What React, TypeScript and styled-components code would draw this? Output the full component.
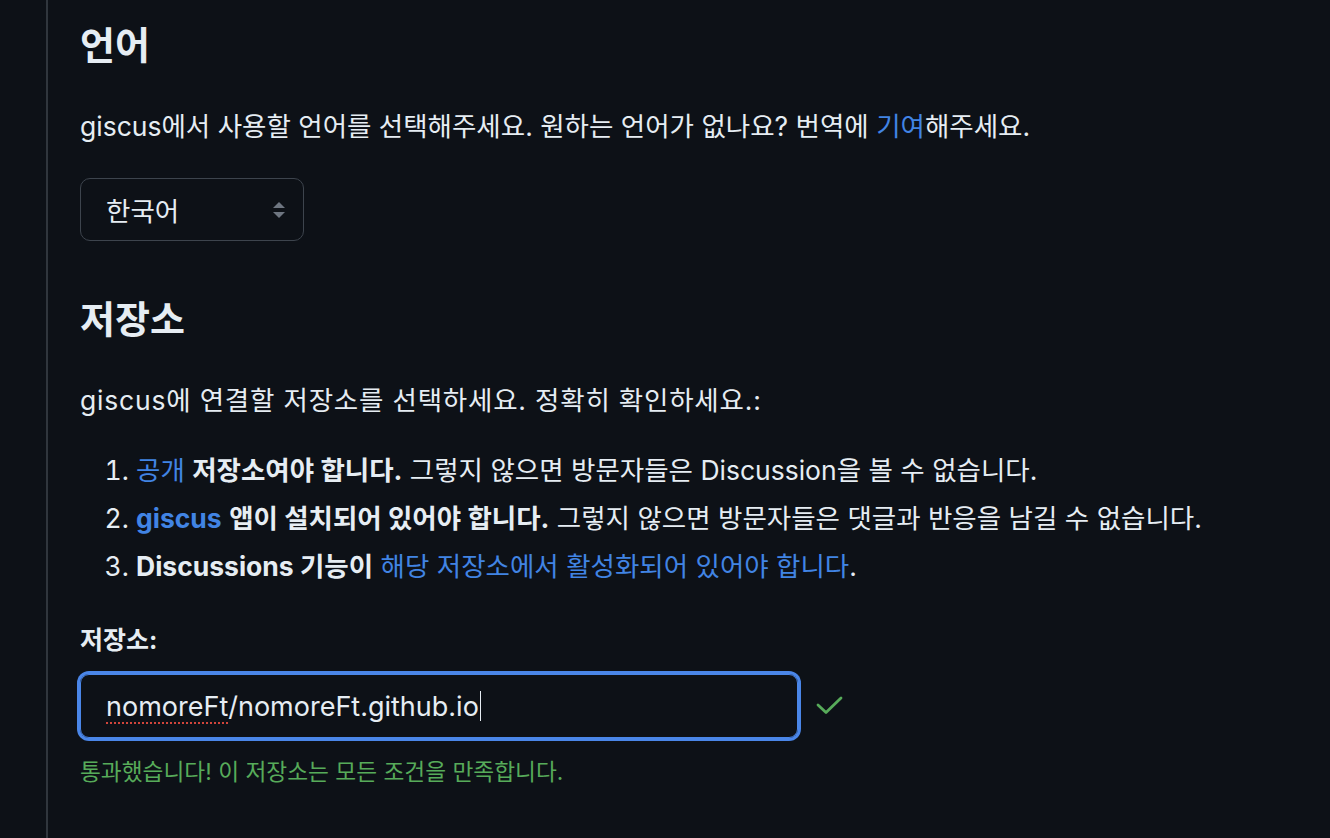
import React from "react";
import styled, { createGlobalStyle } from "styled-components";

const GlobalStyle = createGlobalStyle`
  html, body {
    margin: 0;
    padding: 0;
    background: #0d1117;
  }
  body {
    font-family: Inter, "Noto Sans CJK KR", "Noto Sans", sans-serif;
    color: #e6edf3;
  }
`;

const Page = styled.div`
  min-height: 838px;
  box-sizing: border-box;
  margin-left: 46px;
  border-left: 2px solid #30363d;
  padding: 23px 0 0 32px;
`;

const Heading = styled.h2<{ $first?: boolean }>`
  margin: ${(p) => (p.$first ? "0" : "56px")} 0 0 0;
  font-size: 38px;
  line-height: 45px;
  font-weight: 700;
`;

const Para = styled.p<{ $wide?: boolean }>`
  margin: 40px 0 0 0;
  font-size: 26.5px;
  line-height: 36px;
  letter-spacing: ${(p) => (p.$wide ? "0.8px" : "0")};
`;

const Link = styled.a<{ $bold?: boolean }>`
  color: #4184e4;
  text-decoration: none;
  font-weight: ${(p) => (p.$bold ? 700 : 400)};
`;

const SelectBox = styled.div`
  margin-top: 34px;
  width: 224px;
  height: 63px;
  box-sizing: border-box;
  border: 1.5px solid #3d444d;
  border-radius: 10px;
  display: flex;
  align-items: center;
  justify-content: space-between;
  padding: 0 16px 0 25px;
  font-size: 26.5px;
`;

const Arrows = styled.svg`
  width: 16px;
  height: 18px;
`;

const List = styled.ol`
  margin: 34px 0 0 0;
  padding-left: 56px;
  font-size: 26.5px;
  line-height: 36px;
`;

const Item = styled.li`
  & + & {
    margin-top: 12px;
  }
`;

const Strong = styled.strong`
  font-weight: 700;
`;

const Label = styled.label`
  display: block;
  margin-top: 40px;
  font-size: 25px;
  line-height: 32px;
  font-weight: 700;
`;

const FieldRow = styled.div`
  margin-top: 18px;
  display: flex;
  align-items: center;
  gap: 18px;
`;

const Field = styled.div`
  width: 718px;
  height: 64px;
  box-sizing: border-box;
  border: 1px solid #4a86e8;
  box-shadow: 0 0 0 3px #4a86e8;
  border-radius: 9px;
  display: flex;
  align-items: center;
  padding-left: 25px;
  font-size: 27px;
`;

const Misspelled = styled.span`
  text-decoration: underline dotted #d1453b 2px;
  text-underline-offset: 7px;
`;

const Caret = styled.span`
  display: inline-block;
  width: 1.5px;
  height: 30px;
  background: #e6edf3;
  margin-left: 1px;
`;

const Hint = styled.p`
  margin: 18px 0 0 0;
  font-size: 22.7px;
  line-height: 32px;
  color: #57ab5a;
`;

export default function App() {
  return (
    <>
      <GlobalStyle />
      <Page>
        <Heading $first>언어</Heading>
        <Para>
          giscus에서 사용할 언어를 선택해주세요. 원하는 언어가 없나요? 번역에{" "}
          <Link>기여</Link>해주세요.
        </Para>
        <SelectBox>
          <span>한국어</span>
          <Arrows viewBox="0 0 16 18">
            <path d="M8 1 L14 7 H2 Z" fill="#6e7681" />
            <path d="M8 17 L14 11 H2 Z" fill="#6e7681" />
          </Arrows>
        </SelectBox>

        <Heading>저장소</Heading>
        <Para $wide>giscus에 연결할 저장소를 선택하세요. 정확히 확인하세요.:</Para>
        <List>
          <Item>
            <Link>공개</Link> <Strong>저장소여야 합니다.</Strong> 그렇지 않으면
            방문자들은 Discussion을 볼 수 없습니다.
          </Item>
          <Item>
            <Link $bold>giscus</Link> <Strong>앱이 설치되어 있어야 합니다.</Strong>{" "}
            그렇지 않으면 방문자들은 댓글과 반응을 남길 수 없습니다.
          </Item>
          <Item>
            <Strong>Discussions 기능이</Strong>{" "}
            <Link>해당 저장소에서 활성화되어 있어야 합니다</Link>.
          </Item>
        </List>

        <Label>저장소:</Label>
        <FieldRow>
          <Field>
            <Misspelled>nomoreFt</Misspelled>/nomoreFt.github.io
            <Caret />
          </Field>
          <svg width="28" height="20" viewBox="0 0 28 20">
            <path
              d="M2 9 L10 16.5 L25 2"
              fill="none"
              stroke="#57ab5a"
              strokeWidth="2.8"
              strokeLinecap="round"
              strokeLinejoin="round"
            />
          </svg>
        </FieldRow>
        <Hint>통과했습니다! 이 저장소는 모든 조건을 만족합니다.</Hint>
      </Page>
    </>
  );
}
